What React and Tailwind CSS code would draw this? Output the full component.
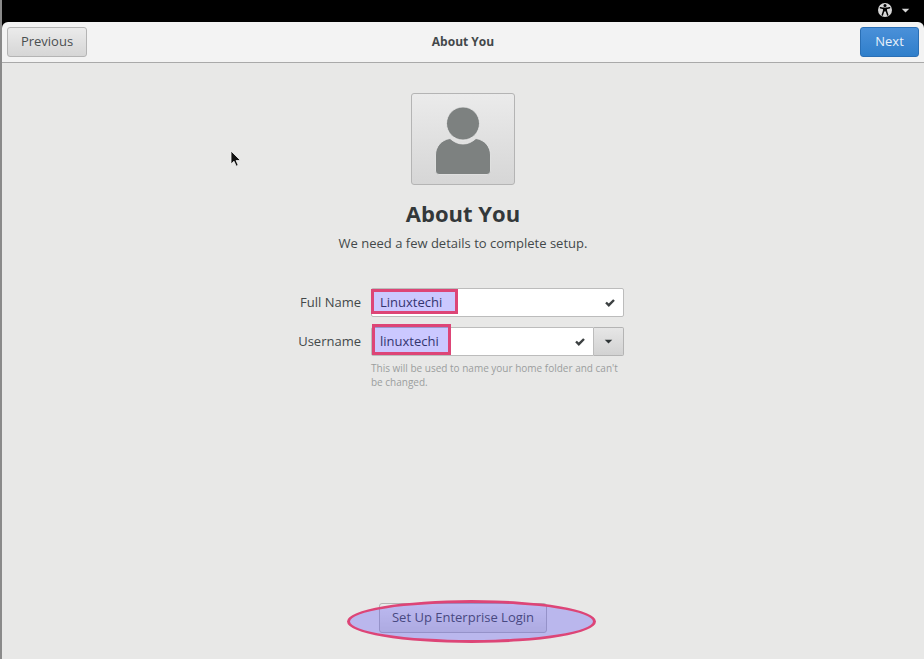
import { useState } from 'react';

const buttonBase =
  'border border-[#b4b4b4] rounded-[3px] bg-linear-to-b from-[#ebebeb] to-[#d6d6d6] text-[#4a4f50]';

const inputBase =
  'block w-full h-[29px] border border-[#bcbcbc] bg-white pl-2 pr-8 pb-[2px] text-[13px] text-[#2e3436] outline-none';

const AccessibilityIcon = () => (
  <svg className="w-4 h-4" viewBox="0 0 16 16">
    <circle cx="8" cy="8" r="7" fill="#d6d6d6" />
    <circle cx="8" cy="3.6" r="1.5" fill="#000" />
    <path
      d="M3.4 5.7L6.7 6.5V8.7L5.3 13M12.6 5.7L9.3 6.5V8.7L10.7 13"
      fill="none"
      stroke="#000"
      strokeWidth="1.5"
      strokeLinecap="round"
      strokeLinejoin="round"
    />
    <path d="M6.2 5.6h3.6v3.8H6.2z" fill="#000" />
  </svg>
);

const CaretIcon = ({ className }) => (
  <svg className={className} viewBox="0 0 10 6" fill="currentColor">
    <path d="M0.5 0.8h9L5 5.4z" />
  </svg>
);

const CheckIcon = () => (
  <svg className="absolute right-2 top-2 w-3 h-3 text-[#3c4142]" viewBox="0 0 12 12" fill="none" stroke="currentColor">
    <path d="M2 6.5L4.8 9.2L10 4" strokeWidth="2.4" />
  </svg>
);

const UserIcon = () => (
  <svg className="w-14 h-[68px]" viewBox="0 0 56 68" fill="#7d8180" stroke="#ececec" strokeWidth="0.8">
    <path d="M15 31.500C19 35 23 37 28 37s9-2 13-5.500C50 33 55.500 40 55.500 48v16a3.500 3.500 0 0 1-3.500 3.500H4A3.500 3.500 0 0 1 .5 64V48C.5 40 6 33 15 31.500z" />
    <circle cx="28" cy="16.500" r="16.500" />
  </svg>
);

const PointerIcon = () => (
  <svg className="absolute left-[228px] top-[87px] w-3 h-[18px]" viewBox="0 0 12 18">
    <path
      d="M1 1v13l3-2.800 2.200 5 2-.9L6.100 10.500h4.400z"
      fill="#111"
      stroke="#f4f4f4"
      strokeWidth="0.8"
    />
  </svg>
);

const App = () => {
  const [fullName, setFullName] = useState('Linuxtechi');
  const [username, setUsername] = useState('linuxtechi');

  return (
    <div className="min-h-screen flex flex-col bg-black border-l-2 border-[#8a8a8a] font-['Open_Sans',sans-serif] text-[13px] text-[#43484a]">
      {/* Top bar */}
      <div className="h-[22px] flex items-center justify-end gap-2 pr-[14px] pb-[2px]">
        <AccessibilityIcon />
        <CaretIcon className="w-[9px] h-[5px] text-[#d6d6d6]" />
      </div>

      <header className="h-[41px] grid grid-cols-3 items-center bg-[#f3f3f3] border-b border-[#a9a9a9] rounded-t-md px-[5px]">
        <button type="button" className={`${buttonBase} w-20 h-[30px] justify-self-start`}>Previous</button>
        <h1 className="text-center text-[12px] font-bold">About You</h1>
        <button
          type="button"
          className="w-[59px] h-[30px] justify-self-end border border-[#2a6fb5] rounded-[3px] bg-linear-to-b from-[#4a90d9] to-[#2f7fcb] text-[#e8f1fa]"
        >
          Next
        </button>
      </header>

      <main className="relative flex-1 flex flex-col items-center bg-[#e8e8e7] pt-[30px] pb-[26px]">
        <PointerIcon />

        <button
          type="button"
          aria-label="Choose a picture"
          className={`${buttonBase} w-[104px] h-[92px] flex items-center justify-center pt-1`}
        >
          <UserIcon />
        </button>

        <h2 className="mt-3 text-[22px] leading-8 font-bold text-[#33383a]">About You</h2>
        <p className="mt-1 leading-5">We need a few details to complete setup.</p>

        <form className="mt-[35px] grid grid-cols-[59px_253px] gap-x-[10px] items-center">
          <label htmlFor="fullName" className="justify-self-end whitespace-nowrap">Full Name</label>
          <div className="relative">
            <input
              id="fullName"
              type="text"
              value={fullName}
              onChange={(e) => setFullName(e.target.value)}
              className={`${inputBase} rounded-[2px]`}
            />
            <CheckIcon />
            <span className="absolute left-0 top-px w-[87px] h-[25px] border-3 border-[#dd4577] bg-[#4338ff]/28 pointer-events-none" />
          </div>

          <label htmlFor="username" className="mt-[10px] justify-self-end whitespace-nowrap">Username</label>
          <div className="mt-[10px] flex">
            <div className="relative flex-1">
              <input
                id="username"
                type="text"
                value={username}
                onChange={(e) => setUsername(e.target.value)}
                className={`${inputBase} rounded-l-[2px]`}
              />
              <CheckIcon />
              <span className="absolute left-px -top-[3px] w-[79px] h-[31px] border-3 border-[#dd4577] bg-[#4338ff]/28 pointer-events-none" />
            </div>
            <button
              type="button"
              aria-label="Username suggestions"
              className="w-[30px] h-[29px] flex items-center justify-center border border-l-0 border-[#b4b4b4] rounded-r-[2px] bg-linear-to-b from-[#e6e6e6] to-[#d2d2d2]"
            >
              <CaretIcon className="w-[9px] h-[5px] text-[#2e3436]" />
            </button>
          </div>

          <p className="col-start-2 mt-[5px] text-[10px] leading-[14px] text-[#9b9e9e]">
            This will be used to name your home folder and can't be changed.
          </p>
        </form>

        <div className="relative mt-auto">
          <button type="button" className={`${buttonBase} w-[168px] h-[30px]`}>Set Up Enterprise Login</button>
          <span className="absolute -left-8 -top-[3px] w-[249px] h-[43px] rounded-[50%] border-3 border-[#dd4577] bg-[#4338ff]/28 pointer-events-none" />
        </div>
      </main>
    </div>
  );
};

export default App;
